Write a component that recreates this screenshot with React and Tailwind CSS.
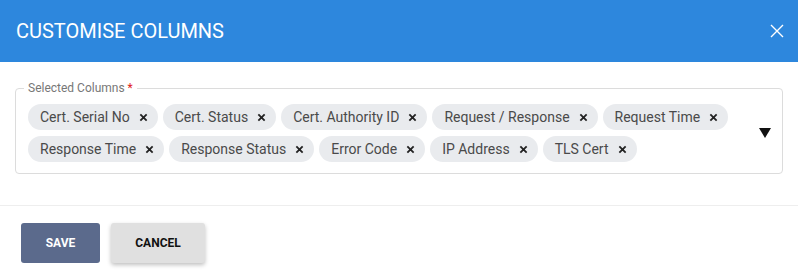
import React from "react"

const columns = [
	"Cert. Serial No",
	"Cert. Status",
	"Cert. Authority ID",
	"Request / Response",
	"Request Time",
	"Response Time",
	"Response Status",
	"Error Code",
	"IP Address",
	"TLS Cert",
]

function Chip({ label }) {
	return (
		<div className="flex items-center h-[26px] pl-3 pr-[10px] rounded-full bg-[#e9ebee] text-[14px] text-[#4a4a4a]">
			<span>{label}</span>
			<svg className="ml-[9px]" width="9" height="9" viewBox="0 0 10 10">
				<path d="M1.5 1.5 L8.5 8.5 M8.5 1.5 L1.5 8.5" stroke="#222" strokeWidth="2" />
			</svg>
		</div>
	)
}

export default function App() {
	return (
		<div className="w-[798px] h-[278px] bg-white font-['Roboto',sans-serif] overflow-hidden">
			{/* header */}
			<div className="flex items-center justify-between h-[62px] bg-[#2d87dd] pl-4 pr-[14px]">
				<h1 className="text-[20px] text-white">CUSTOMISE COLUMNS</h1>
				<svg width="14" height="14" viewBox="0 0 14 14">
					<path d="M1 1 L13 13 M13 1 L1 13" stroke="white" strokeWidth="1.4" />
				</svg>
			</div>

			{/* body */}
			<div className="px-[15px] pt-[20px] pb-[31px] border-b border-[#eeeeee]">
				<fieldset className="border border-[#dcdcdc] rounded-[4px] pl-3 pr-[11px] pb-[11px] pt-[10px] flex items-center">
					<legend className="ml-[-4px] px-1 text-[12px] text-[#777] leading-none">
						Selected Columns <span className="text-[#e02020]">*</span>
					</legend>
					<div className="flex-1 flex flex-wrap gap-x-[5px] gap-y-[6px] pr-2">
						{columns.map((c) => (
							<Chip key={c} label={c} />
						))}
					</div>
					<svg width="12" height="10" viewBox="0 0 12 10">
						<path d="M0 0 L12 0 L6 10 Z" fill="#111" />
					</svg>
				</fieldset>
			</div>

			{/* footer */}
			<div className="flex gap-[11px] pl-[21px] pt-[17px]">
				<button className="w-[79px] h-[40px] rounded-[3px] bg-[#5b6a8c] text-white text-[12px] font-bold">
					SAVE
				</button>
				<button className="w-[94px] h-[40px] rounded-[3px] bg-[#e0e0e0] text-[#111] text-[12px] font-bold shadow-[0_2px_4px_rgba(0,0,0,0.25)]">
					CANCEL
				</button>
			</div>
		</div>
	)
}
